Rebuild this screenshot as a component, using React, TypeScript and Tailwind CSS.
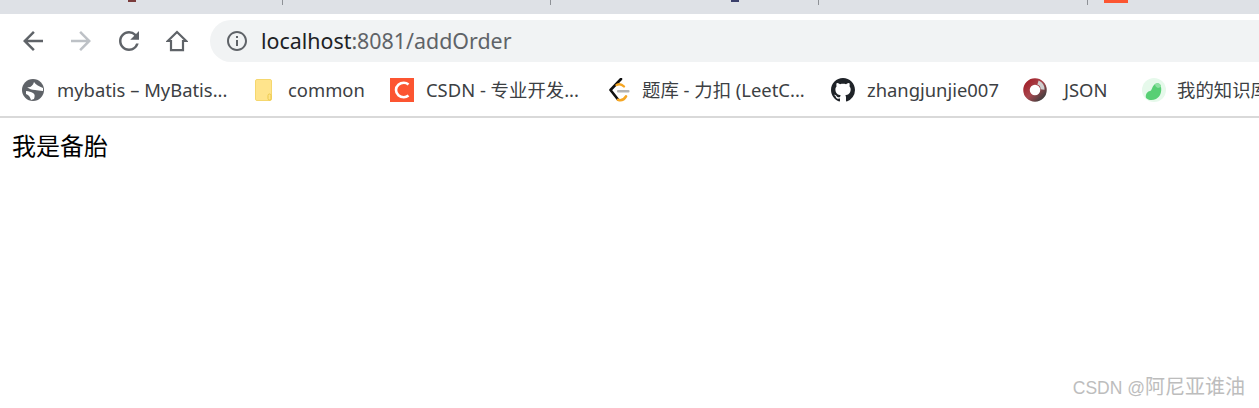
const font = "font-['Noto_Sans','Noto_Sans_CJK_SC',sans-serif]";

function GlobeIcon() {
  return (
    <svg width="22" height="22" viewBox="0 0 22 22">
      <circle cx="11" cy="11" r="11" fill="#5f6368" />
      <path d="M5 8C8 9 11 7 12 3c2 3 5 4 9 6l0 3c-3 0-6-1-8-1-3 0-6-1-8-3z" fill="#fff" />
      <path d="M4 12c3 0 5 1 7 2 2 1 2 3 1 6l-3 1c-1-3-2-5-5-6z" fill="#fff" />
    </svg>
  );
}

function FolderIcon() {
  return (
    <svg width="17" height="22" viewBox="0 0 17 22">
      <rect x="0.5" y="0.5" width="16" height="21" rx="1.5" fill="#ffe48c" stroke="#f5d76e" />
      <rect x="13" y="15" width="3" height="6" rx="1.5" fill="none" stroke="#ecc94b" />
    </svg>
  );
}

function CsdnIcon() {
  return (
    <div className="flex h-6 w-6 items-center justify-center bg-[#fc5531]">
      <svg width="18" height="18" viewBox="0 0 18 18">
        <path d="M15.500 3.400C14.200 2.300 12.600 1.700 10.800 1.700 6.800 1.700 3 4.600 3 9s3.800 7.300 7.800 7.300c1.800 0 3.400-.6 4.700-1.700" fill="none" stroke="#fff" strokeWidth="2.600" />
      </svg>
    </div>
  );
}

function LeetcodeIcon() {
  return (
    <svg width="22" height="24" viewBox="0 0 22 24">
      <path d="M13 1 2.500 12 10 21.500" fill="none" stroke="#111" strokeWidth="2.600" strokeLinecap="round" strokeLinejoin="round" />
      <path d="M10 21.800c3 1 6 0 8-3.500" fill="none" stroke="#f5a623" strokeWidth="2.600" strokeLinecap="round" />
      <path d="M8.500 7c3-1.500 5.500-.5 7.500 1.500" fill="none" stroke="#f5a623" strokeWidth="2.400" strokeLinecap="round" />
      <rect x="9" y="12" width="12.500" height="2.400" rx="1" fill="#b3b3b3" />
    </svg>
  );
}

function GithubIcon() {
  return (
    <svg width="24" height="24" viewBox="0 0 16 16" fill="#1f2328">
      <path d="M8 0C3.580 0 0 3.580 0 8c0 3.540 2.290 6.530 5.470 7.590.4.070.55-.17.55-.38 0-.19-.01-.82-.01-1.490-2.010.37-2.530-.49-2.690-.94-.09-.23-.48-.94-.82-1.130-.28-.15-.68-.52-.01-.53.63-.01 1.080.58 1.230.82.720 1.210 1.870.87 2.330.66.070-.52.280-.87.510-1.070-1.780-.2-3.640-.89-3.640-3.950 0-.87.310-1.590.820-2.150-.08-.2-.36-1.020.08-2.120 0 0 .67-.21 2.200.82.640-.18 1.320-.27 2-.27s1.360.09 2 .27c1.530-1.040 2.200-.82 2.200-.82.440 1.100.16 1.920.08 2.120.51.560.82 1.270.82 2.150 0 3.070-1.870 3.750-3.650 3.950.29.250.54.730.54 1.480 0 1.070-.01 1.930-.01 2.200 0 .21.150.46.550.38A8.010 8.010 0 0 0 16 8c0-4.420-3.580-8-8-8z" />
    </svg>
  );
}

function JsonIcon() {
  return (
    <svg width="24" height="24" viewBox="0 0 24 24">
      <defs>
        <linearGradient id="ring" x1="0" y1="0" x2="1" y2="1">
          <stop offset="0" stopColor="#a3212b" />
          <stop offset="0.5" stopColor="#a8474e" />
          <stop offset="1" stopColor="#3f3f3f" />
        </linearGradient>
      </defs>
      <circle cx="12" cy="12" r="8.500" fill="none" stroke="url(#ring)" strokeWidth="6.500" />
      <path d="M15 4.500c3 1 4.800 4 4.500 7" fill="none" stroke="#cfcfcf" strokeWidth="4" />
    </svg>
  );
}

function NoteIcon() {
  return (
    <svg width="24" height="24" viewBox="0 0 24 24">
      <circle cx="12" cy="12" r="12" fill="#e6f9eb" />
      <path d="M4 20C3 16 6 13 8 13c2 0 2-5 5-7 3-2 6 0 6 3 1 5-1 10-5 12-4 2-8 1-10-1z" fill="#57cf74" />
      <path d="M13 6c3-2 6 0 6 3l-3 1c-2-1-3-2-3-4z" fill="#8fe0a3" />
    </svg>
  );
}

const bookmarks = [
  { label: "mybatis – MyBatis...", icon: <GlobeIcon />, iconBox: "w-[22px]", gap: "mr-[13px]", width: "w-[171px]", after: "mr-[27px]" },
  { label: "common", icon: <FolderIcon />, iconBox: "w-[17px]", gap: "mr-4", width: "w-[77px]", after: "mr-[25px]" },
  { label: "CSDN - 专业开发...", icon: <CsdnIcon />, iconBox: "w-6", gap: "mr-3", width: "w-[156px]", after: "mr-[26px]" },
  { label: "题库 - 力扣 (LeetC...", icon: <LeetcodeIcon />, iconBox: "w-[22px]", gap: "mr-3", width: "w-[165px]", after: "mr-6" },
  { label: "zhangjunjie007", icon: <GithubIcon />, iconBox: "w-6", gap: "mr-3", width: "w-[131px]", after: "mr-[25px]" },
  { label: "JSON", icon: <JsonIcon />, iconBox: "w-6", gap: "mr-[17px]", width: "w-[47px]", after: "mr-[31px]" },
  { label: "我的知识库", icon: <NoteIcon />, iconBox: "w-6", gap: "mr-[11px]", width: "w-[90px]", after: "" },
];

export default function App() {
  return (
    <div className={`relative h-[408px] w-[1259px] overflow-hidden bg-white ${font}`}>
      <div className="flex h-[14px] items-start bg-[#dee1e6]">
        <div className="h-[5px] w-[283px] border-r border-[#8e9196]">
          <div className="ml-[128px] h-0.5 w-2 bg-[#7a3b3b]" />
        </div>
        <div className="h-[5px] w-[268px] border-r border-[#8e9196]" />
        <div className="h-[5px] w-[268px] border-r border-[#8e9196]">
          <div className="ml-[180px] h-0.5 w-2 bg-[#3b3f6b]" />
        </div>
        <div className="h-[5px] w-[269px] border-r border-[#8e9196]" />
        <div className="ml-[16px] h-[3px] w-6 bg-[#fc5531]" />
      </div>

      <div className="flex h-[48px] items-start pt-1.5">
        <div className="flex h-[42px] w-[210px] items-center pl-[9px]">
          <div className="flex w-12 justify-center">
            <svg width="30" height="30" viewBox="0 0 24 24" fill="#5f6368">
              <path d="M20 11H7.830l5.590-5.590L12 4l-8 8 8 8 1.410-1.410L7.830 13H20v-2z" />
            </svg>
          </div>
          <div className="flex w-12 justify-center">
            <svg width="30" height="30" viewBox="0 0 24 24" fill="#bdc1c6">
              <path d="M4 11h12.170l-5.590-5.590L12 4l8 8-8 8-1.410-1.410L16.170 13H4v-2z" />
            </svg>
          </div>
          <div className="flex w-12 justify-center">
            <svg width="30" height="30" viewBox="0 0 24 24" fill="#5f6368">
              <path d="M17.650 6.350A7.958 7.958 0 0 0 12 4c-4.420 0-7.990 3.580-7.990 8s3.570 8 7.990 8c3.730 0 6.840-2.550 7.730-6h-2.080A5.990 5.990 0 0 1 12 18c-3.310 0-6-2.690-6-6s2.690-6 6-6c1.660 0 3.140.69 4.220 1.780L13 11h7V4l-2.350 2.350z" />
            </svg>
          </div>
          <div className="flex w-12 justify-center">
            <svg width="22" height="22" viewBox="0 0 22 22" fill="none" stroke="#5f6368" strokeWidth="2.200">
              <path d="M11 2 1.800 11H5v9.200h12V11h3.200z" strokeLinejoin="miter" />
            </svg>
          </div>
        </div>
        <div className="flex h-[42px] flex-1 items-center rounded-l-[21px] bg-[#f1f3f4] pl-[15px]">
          <svg width="24" height="24" viewBox="0 0 24 24" fill="#5f6368">
            <path d="M11 7h2v2h-2zm0 4h2v6h-2zm1-9C6.480 2 2 6.480 2 12s4.480 10 10 10 10-4.480 10-10S17.520 2 12 2zm0 18c-4.410 0-8-3.590-8-8s3.590-8 8-8 8 3.590 8 8-3.590 8-8 8z" />
          </svg>
          <span className="ml-3 text-[21.4px] text-[#202124]">
            localhost<span className="text-[#5f6368]">:8081/addOrder</span>
          </span>
        </div>
      </div>

      <div className="flex h-[56px] items-center border-b-2 border-[#d9d9d9] pt-0.5 pl-[22px]">
        {bookmarks.map((b) => (
          <div key={b.label} className={`flex shrink-0 items-center ${b.after}`}>
            <div className={`flex justify-center ${b.iconBox} ${b.gap}`}>{b.icon}</div>
            <span className={`whitespace-nowrap text-[18.4px] leading-6 text-[#3c4043] ${b.width}`}>{b.label}</span>
          </div>
        ))}
      </div>

      <div className="px-3 pt-[10px] text-2xl leading-9 text-black">我是备胎</div>

      <div className="absolute bottom-[8px] right-[14px] font-['Liberation_Sans','Noto_Sans_CJK_SC',sans-serif] text-[17.5px] leading-6 text-[#bdbdbd]">
        CSDN @<span className="text-[20px]">阿尼亚谁油</span>
      </div>
    </div>
  );
}
